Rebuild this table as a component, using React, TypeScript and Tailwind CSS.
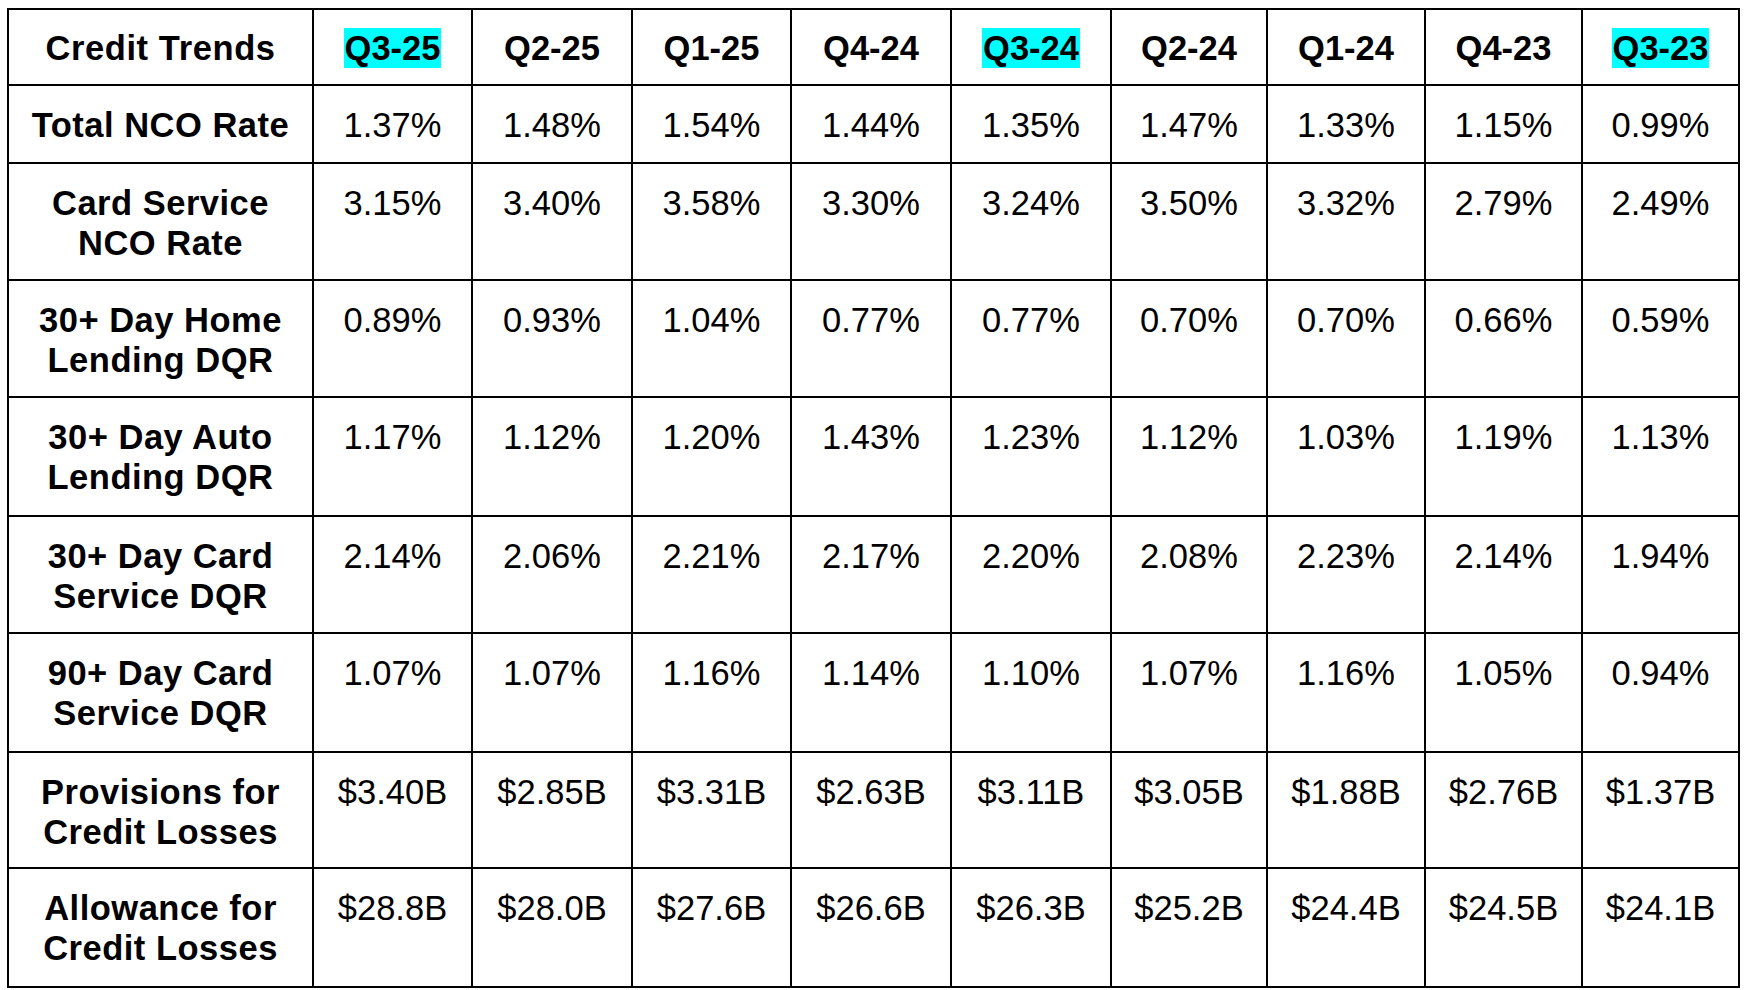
import React from "react";

const quarters = ["Q3-25", "Q2-25", "Q1-25", "Q4-24", "Q3-24", "Q2-24", "Q1-24", "Q4-23", "Q3-23"];
const highlighted = ["Q3-25", "Q3-24", "Q3-23"];

const rows: { label: string[]; values: string[] }[] = [
  { label: ["Total NCO Rate"], values: ["1.37%", "1.48%", "1.54%", "1.44%", "1.35%", "1.47%", "1.33%", "1.15%", "0.99%"] },
  { label: ["Card Service", "NCO Rate"], values: ["3.15%", "3.40%", "3.58%", "3.30%", "3.24%", "3.50%", "3.32%", "2.79%", "2.49%"] },
  { label: ["30+ Day Home", "Lending DQR"], values: ["0.89%", "0.93%", "1.04%", "0.77%", "0.77%", "0.70%", "0.70%", "0.66%", "0.59%"] },
  { label: ["30+ Day Auto", "Lending DQR"], values: ["1.17%", "1.12%", "1.20%", "1.43%", "1.23%", "1.12%", "1.03%", "1.19%", "1.13%"] },
  { label: ["30+ Day Card", "Service DQR"], values: ["2.14%", "2.06%", "2.21%", "2.17%", "2.20%", "2.08%", "2.23%", "2.14%", "1.94%"] },
  { label: ["90+ Day Card", "Service DQR"], values: ["1.07%", "1.07%", "1.16%", "1.14%", "1.10%", "1.07%", "1.16%", "1.05%", "0.94%"] },
  { label: ["Provisions for", "Credit Losses"], values: ["$3.40B", "$2.85B", "$3.31B", "$2.63B", "$3.11B", "$3.05B", "$1.88B", "$2.76B", "$1.37B"] },
  { label: ["Allowance for", "Credit Losses"], values: ["$28.8B", "$28.0B", "$27.6B", "$26.6B", "$26.3B", "$25.2B", "$24.4B", "$24.5B", "$24.1B"] },
];

const App = () => {
  return (
    <div
      className="min-h-screen bg-white pl-[7px] pt-[8px] text-black"
      style={{ fontFamily: '"Liberation Sans", Arial, sans-serif' }}
    >
      <div className="grid w-fit grid-cols-[303px_157px_158px_157px_158px_158px_154px_156px_155px_155px] grid-rows-[74px_76px_115px_115px_117px_115px_117px_114px_117px] gap-[2px] bg-black p-[2px] text-[34.5px] leading-[40px]">
        {/* Header */}
        <div className="bg-white pt-[18px] text-center font-bold tracking-[0.6px]">Credit Trends</div>
        {quarters.map((q) => (
          <div key={q} className="bg-white pt-[18px] text-center font-bold">
            {highlighted.includes(q) ? <span className="bg-[#00ffff] px-[1px] py-[1px]">{q}</span> : q}
          </div>
        ))}

        {/* Body */}
        {rows.map((row) => (
          <React.Fragment key={row.label.join(" ")}>
            <div className="bg-white pt-[19px] text-center font-bold tracking-[0.5px]">
              {row.label.map((l) => (
                <div key={l}>{l}</div>
              ))}
            </div>
            {row.values.map((v, i) => (
              <div key={i} className="bg-white pt-[19px] text-center">
                {v}
              </div>
            ))}
          </React.Fragment>
        ))}
      </div>
    </div>
  );
};

export default App;
